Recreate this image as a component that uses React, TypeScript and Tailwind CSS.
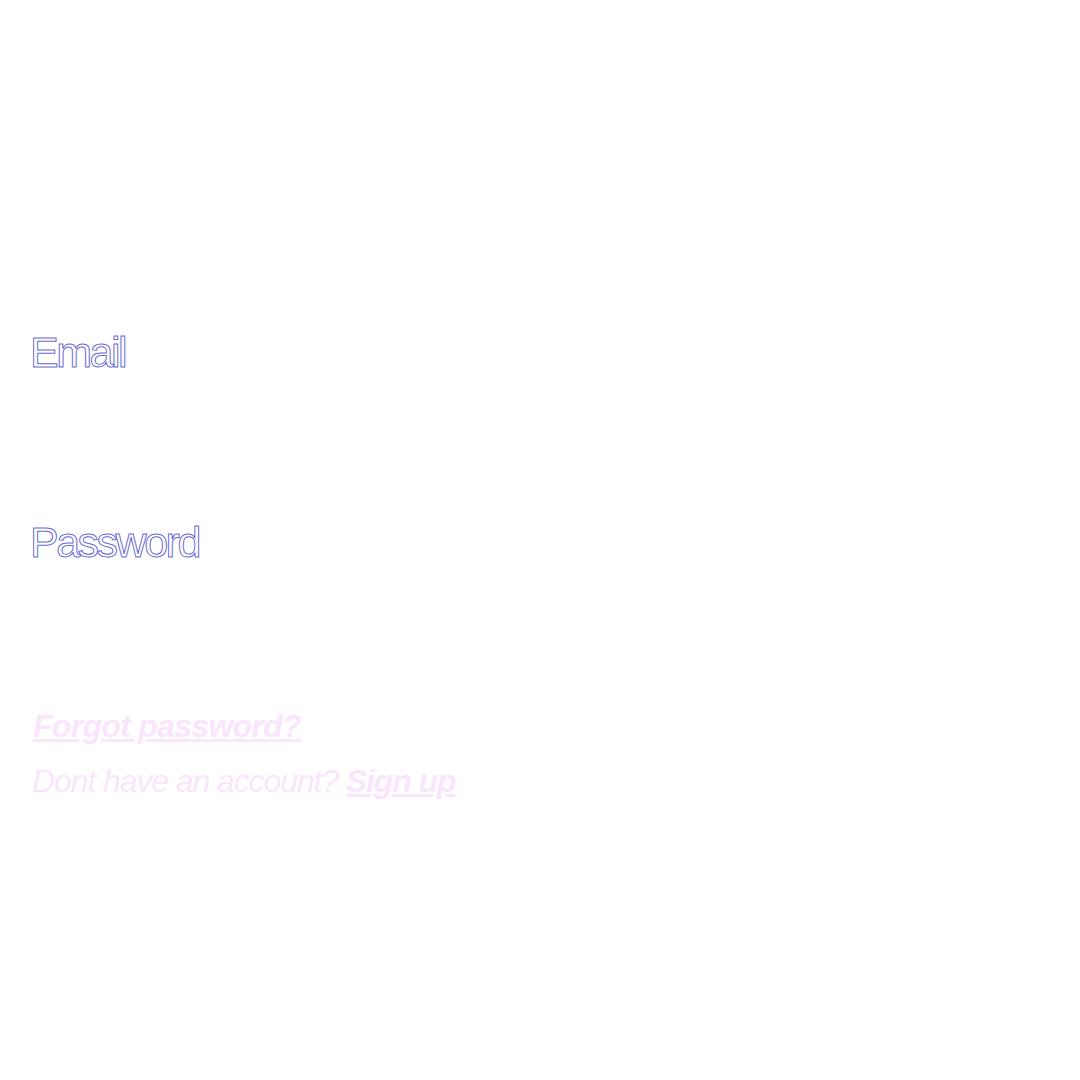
export default function App() {
  return (
    <div className="w-[1080px] h-[1080px] bg-white font-['Liberation_Sans',Arial,sans-serif] pl-[30px] pt-[320px]">
      <form className="flex flex-col">
        <label className="text-[43px] leading-[64px] tracking-[-2.5px] text-transparent [-webkit-text-stroke:1px_#6b6bd4]">
          Email
        </label>
        <input className="h-[126px] bg-white outline-none" type="email" />
        <label className="text-[43px] leading-[64px] tracking-[-2.5px] text-transparent [-webkit-text-stroke:1px_#6b6bd4]">
          Password
        </label>
        <input className="h-[128px] bg-white outline-none" type="password" />
        <a className="ml-[3px] text-[32px] leading-[48px] font-bold italic underline tracking-[-0.7px] text-[#f9e5fc] w-fit">
          Forgot password?
        </a>
        <p className="ml-[2px] mt-[7px] text-[32px] leading-[48px] italic tracking-[-1.1px] text-[#f9e5fc]">
          Dont have an account?{" "}
          <a className="font-bold underline">Sign up</a>
        </p>
      </form>
    </div>
  );
}
